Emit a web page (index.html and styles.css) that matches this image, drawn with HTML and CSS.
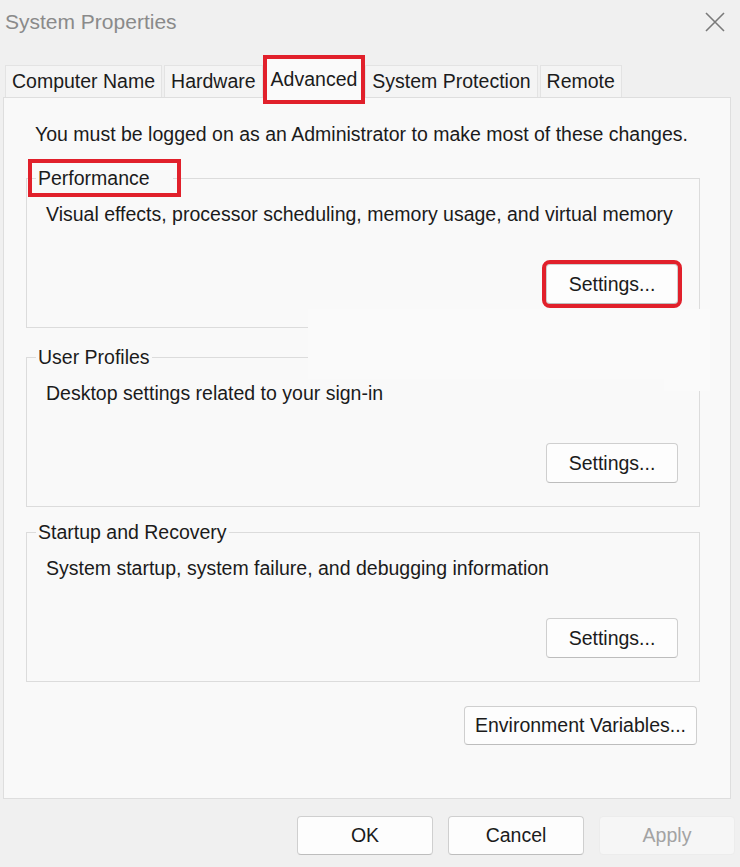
FILE: index.html
```html
<!DOCTYPE html>
<html lang="en">
<head>
    <meta charset="UTF-8">
    <title>System Properties</title>
    <link rel="stylesheet" href="styles.css">
</head>
<body>
    <div class="titlebar">
        <span class="title">System Properties</span>
        <svg class="close" width="20" height="20" viewBox="0 0 20 20">
            <path d="M1 1 L19 19 M19 1 L1 19" stroke="#7a7a7a" stroke-width="1.6" fill="none"/>
        </svg>
    </div>
    <div class="tabs">
        <div class="tab">Computer Name</div>
        <div class="tab">Hardware</div>
        <div class="tab active hl">Advanced</div>
        <div class="tab">System Protection</div>
        <div class="tab">Remote</div>
    </div>
    <div class="panel">
        <p class="notice">You must be logged on as an Administrator to make most of these changes.</p>
        <fieldset class="group">
            <legend class="hl-legend">Performance</legend>
            <p class="desc">Visual effects, processor scheduling, memory usage, and virtual memory</p>
            <div class="row"><button class="btn hl">Settings...</button></div>
        </fieldset>
        <fieldset class="group second">
            <legend>User Profiles</legend>
            <p class="desc">Desktop settings related to your sign-in</p>
            <div class="row"><button class="btn">Settings...</button></div>
        </fieldset>
        <fieldset class="group third">
            <legend>Startup and Recovery</legend>
            <p class="desc">System startup, system failure, and debugging information</p>
            <div class="row"><button class="btn">Settings...</button></div>
        </fieldset>
        <div class="row env"><button class="btn wide">Environment Variables...</button></div>
        <div class="patch"></div>
        <div class="patch edge"></div>
    </div>
    <div class="footer">
        <button class="btn dlg">OK</button>
        <button class="btn dlg">Cancel</button>
        <button class="btn dlg disabled">Apply</button>
    </div>
</body>
</html>
```

FILE: styles.css
```css
body {
    margin: 0;
    background: #f0f0f0;
    font-family: "Liberation Sans", Arial, sans-serif;
    font-size: 19.5px;
    color: #1b1b1b;
    width: 740px;
    height: 867px;
    overflow: hidden;
}
.titlebar {
    height: 44px;
    display: flex;
    align-items: center;
    justify-content: space-between;
    padding: 0 15px 0 5px;
}
.title {
    font-size: 21px;
    color: #8a8a8a;
}
.close {
    display: block;
}
.tabs {
    display: flex;
    align-items: flex-start;
    gap: 2px;
    margin: 21px 0 0 5px;
    height: 32px;
}
.tab {
    height: 32px;
    box-sizing: border-box;
    padding: 0 6px 2px;
    display: flex;
    align-items: center;
    background: #f4f4f4;
    border: 1px solid #e3e3e3;
    border-bottom: none;
    line-height: 22px;
}
.tab.active {
    margin: -6px 2px 0;
    height: 41px;
    padding: 0 4px 2px;
    background: #fafafa;
    border: none;
    position: relative;
    z-index: 2;
}
.hl {
    outline: 4px solid #e1202b;
}
.panel {
    position: relative;
    margin: 0 9px 0 3px;
    height: 702px;
    box-sizing: border-box;
    background: #f9f9f9;
    border: 1px solid #dedede;
    padding-top: 25px;
}
.notice {
    margin: 0;
    padding-left: 31px;
    line-height: 22px;
}
.group {
    margin: 22px 30px 0 22px;
    padding: 0 0 23px;
    border: 1px solid #dcdcdc;
    min-width: 0;
}
.group.second {
    margin-top: 18px;
}
.group.third {
    margin-top: 14px;
}
.group legend {
    margin-left: 9px;
    padding: 0 2px;
    line-height: 22px;
}
.group legend.hl-legend {
    padding: 0 23px 0 2px;
    outline: 4px solid #e1202b;
    outline-offset: 4px;
}
.desc {
    margin: 14px 0 0;
    padding-left: 19px;
    line-height: 22px;
}
.row {
    display: flex;
    justify-content: flex-end;
    margin-top: 39px;
    padding-right: 21px;
}
.btn {
    font-family: "Liberation Sans", Arial, sans-serif;
    font-size: 19.5px;
    color: #1b1b1b;
    background: #fdfdfd;
    border: 1px solid #cfcfcf;
    border-bottom-color: #bdbdbd;
    border-radius: 4px;
    width: 132px;
    height: 40px;
    padding: 0;
}
.row.env {
    margin-top: 24px;
    padding-right: 33px;
}
.btn.wide {
    width: 233px;
    height: 39px;
}
/* light smudge in the original capture that hides part of the group borders */
.patch {
    position: absolute;
    left: 304px;
    top: 211px;
    width: 402px;
    height: 70px;
    background: #fafafa;
}
.patch.edge {
    left: 660px;
    width: 46px;
    height: 82px;
}
.footer {
    display: flex;
    justify-content: flex-end;
    gap: 15px;
    padding: 17px 5px 0 0;
}
.btn.dlg {
    width: 136px;
    height: 39px;
}
.btn.disabled {
    color: #a3a3a3;
    background: #f6f6f6;
    border-color: #ececec;
}
```
